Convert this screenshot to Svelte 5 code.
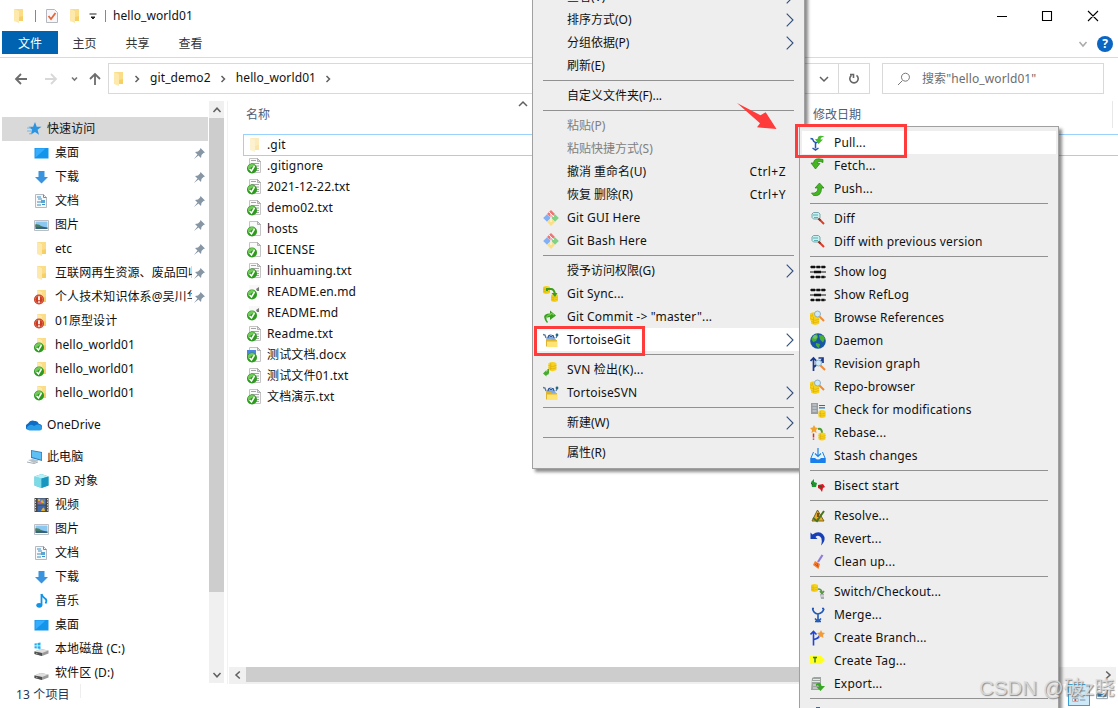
<script lang="ts">
  type Item = { label: string; icon?: string; key?: string; arrow?: boolean; disabled?: boolean; active?: boolean };
  type Entry = Item | null;

  const quick = [
    { label: '桌面', icon: 'desktop', pin: true },
    { label: '下载', icon: 'download', pin: true },
    { label: '文档', icon: 'document', pin: true },
    { label: '图片', icon: 'picture', pin: true },
    { label: 'etc', icon: 'folder', pin: true },
    { label: '互联网再生资源、废品回收', icon: 'folder', pin: true },
    { label: '个人技术知识体系@吴川华', icon: 'folder-red', pin: true },
    { label: '01原型设计', icon: 'folder-red' },
    { label: 'hello_world01', icon: 'folder-ok' },
    { label: 'hello_world01', icon: 'folder-ok' },
    { label: 'hello_world01', icon: 'folder-ok' }
  ];

  const computer = [
    { label: '3D 对象', icon: 'cube' },
    { label: '视频', icon: 'video' },
    { label: '图片', icon: 'picture' },
    { label: '文档', icon: 'document' },
    { label: '下载', icon: 'download' },
    { label: '音乐', icon: 'music' },
    { label: '桌面', icon: 'desktop' },
    { label: '本地磁盘 (C:)', icon: 'disk-c' },
    { label: '软件区 (D:)', icon: 'disk' }
  ];

  const files = [
    { name: '.git', icon: 'folder-faded' },
    { name: '.gitignore', icon: 'txt' },
    { name: '2021-12-22.txt', icon: 'txt' },
    { name: 'demo02.txt', icon: 'txt' },
    { name: 'hosts', icon: 'blank' },
    { name: 'LICENSE', icon: 'blank' },
    { name: 'linhuaming.txt', icon: 'txt' },
    { name: 'README.en.md', icon: 'md' },
    { name: 'README.md', icon: 'md' },
    { name: 'Readme.txt', icon: 'txt' },
    { name: '测试文档.docx', icon: 'docx' },
    { name: '测试文件01.txt', icon: 'txt' },
    { name: '文档演示.txt', icon: 'txt' }
  ];

  // null is a separator
  const mainMenu: Entry[] = [
    { label: '查看(V)', arrow: true },
    { label: '排序方式(O)', arrow: true },
    { label: '分组依据(P)', arrow: true },
    { label: '刷新(E)' },
    null,
    { label: '自定义文件夹(F)...' },
    null,
    { label: '粘贴(P)', disabled: true },
    { label: '粘贴快捷方式(S)', disabled: true },
    { label: '撤消 重命名(U)', key: 'Ctrl+Z' },
    { label: '恢复 删除(R)', key: 'Ctrl+Y' },
    { label: 'Git GUI Here', icon: 'git' },
    { label: 'Git Bash Here', icon: 'git' },
    null,
    { label: '授予访问权限(G)', arrow: true },
    { label: 'Git Sync...', icon: 'sync' },
    { label: 'Git Commit -> "master"...', icon: 'commit' },
    { label: 'TortoiseGit', icon: 'tortoise', arrow: true, active: true },
    null,
    { label: 'SVN 检出(K)...', icon: 'svn-checkout' },
    { label: 'TortoiseSVN', icon: 'tortoise', arrow: true },
    null,
    { label: '新建(W)', arrow: true },
    null,
    { label: '属性(R)' }
  ];

  const gitMenu: Entry[] = [
    { label: 'Pull...', icon: 'pull', active: true },
    { label: 'Fetch...', icon: 'fetch' },
    { label: 'Push...', icon: 'push' },
    null,
    { label: 'Diff', icon: 'diff' },
    { label: 'Diff with previous version', icon: 'diff' },
    null,
    { label: 'Show log', icon: 'log' },
    { label: 'Show RefLog', icon: 'log' },
    { label: 'Browse References', icon: 'browse' },
    { label: 'Daemon', icon: 'globe' },
    { label: 'Revision graph', icon: 'graph' },
    { label: 'Repo-browser', icon: 'browse' },
    { label: 'Check for modifications', icon: 'check-mod' },
    { label: 'Rebase...', icon: 'rebase' },
    { label: 'Stash changes', icon: 'stash' },
    null,
    { label: 'Bisect start', icon: 'bisect' },
    null,
    { label: 'Resolve...', icon: 'resolve' },
    { label: 'Revert...', icon: 'revert' },
    { label: 'Clean up...', icon: 'clean' },
    null,
    { label: 'Switch/Checkout...', icon: 'switch' },
    { label: 'Merge...', icon: 'merge' },
    { label: 'Create Branch...', icon: 'branch' },
    { label: 'Create Tag...', icon: 'tag' },
    { label: 'Export...', icon: 'export' },
    null,
    { label: '', icon: 'add' }
  ];
</script>

{#snippet folder()}
  <path d="M4 1h9v12H4z" fill="#fbdc87" />
  <path d="M4 1l5 2v12l-5-2z" fill="#fde9ab" />
  <path d="M9 9l4-1v5H9z" fill="#f3c84f" opacity=".6" />
{/snippet}

{#snippet ok()}
  <circle cx="6" cy="10.5" r="5" fill="#2c9a1d" />
  <path d="M2 8.6a4.4 4.4 0 0 1 7.6-.6C6 8 4 10 2 12z" fill="#74c95c" />
  <path d="M3.6 11l1.9 2 3-5" fill="none" stroke="#fff" stroke-width="1.5" />
{/snippet}

{#snippet coins(x: number, y: number)}
  <path d="M{x} {y + 1}q3.5-2 7 0v6q-3.5 2-7 0z" fill="#f6d21c" />
  <path d="M{x} {y + 3}q3.5 2 7 0M{x} {y + 5}q3.5 2 7 0M{x + 2} {y + 1}v6" fill="none" stroke="#dfac08" stroke-width=".6" />
{/snippet}

{#snippet lens(x: number, y: number)}
  <path d="M{x + 4} {y + 5}l5 5" stroke="#f08a32" stroke-width="2" />
  <circle cx={x + 2.5} cy={y + 3} r="3" fill="#cdeaf8" stroke="#85a8c0" stroke-width=".9" />
{/snippet}

{#snippet icon(name: string)}
  <svg class="icon" viewBox="0 0 16 16" width="16" height="16">
    {#if name === 'folder'}
      {@render folder()}
    {:else if name === 'folder-faded'}
      <g opacity=".55">{@render folder()}</g>
    {:else if name === 'folder-ok'}
      {@render folder()}{@render ok()}
    {:else if name === 'folder-red'}
      {@render folder()}
      <circle cx="6" cy="10.5" r="5" fill="#cb3a20" />
      <circle cx="6" cy="10.5" r="3.8" fill="none" stroke="#e0745c" stroke-width=".8" />
      <path d="M6 7.3v4M6 12.3v1.4" stroke="#fff" stroke-width="1.8" />
    {:else if name === 'txt' || name === 'blank' || name === 'docx'}
      <path d="M3.5.5h8l3 3v11h-11z" fill="#fafafa" stroke="#c4c4c4" />
      <path d="M11.5.5v3h3z" fill="#ddd" stroke="#999" stroke-width=".7" />
      {#if name === 'txt'}
        <path d="M5 2.500h5M5 5.500h8M5 8h8M9 10.500h4M9 12.500h4" stroke="#a6a6a6" stroke-width="1" />
      {:else if name === 'docx'}
        <path d="M1 3h9v8H1z" fill="#4b86e0" />
      {/if}
      {@render ok()}
    {:else if name === 'md'}
      <path d="M3 1h11v13H3z" fill="#f8f8f8" />
      <path d="M10 5l3-2v4h-2z" fill="#777" />
      {@render ok()}
    {:else if name === 'star'}
      <path d="M9 1l1.7 4.7 4.8.1-3.9 3 1.4 5L9 11l-4.4 2.8 1.600-5-3.700-3 4.600-.1z" fill="#2b93e0" />
      <path d="M1 7h4M1 10h5M3 13l3-1" stroke="#6cbcf2" stroke-width="1" />
    {:else if name === 'desktop'}
      <path d="M1.500 3h14v10.500h-14z" fill="#1495ec" />
      <path d="M2.500 12.500l10-9h-10z" fill="#35adff" />
    {:else if name === 'download'}
      <path d="M5.500 2h6v6H15l-6.500 6.500L2 8h3.500z" fill="#3a93de" />
    {:else if name === 'document'}
      <path d="M2.500 1.500h8l3 3v10h-11z" fill="#f8f8f8" stroke="#b4babf" />
      <path d="M10.500 1.500v3h3" fill="none" stroke="#888" />
      <path d="M4 4h4M5 6h4M4 9h8M9 11.500h3M4 12h4" stroke="#3b8fc7" stroke-width="1.2" />
      <path d="M8 7h4v3H8z" fill="#5aa5d5" />
    {:else if name === 'picture'}
      <path d="M1.500 3.500h14v10h-14z" fill="#fff" stroke="#b9bfc4" />
      <path d="M2.500 4.500h12v7.500h-12z" fill="#8cc7f2" />
      <path d="M2.500 8l4 1 8 1.500V12h-12z" fill="#35647a" />
      <path d="M2.500 7q4 0 7 3h-7z" fill="#4a7d67" />
    {:else if name === 'cube'}
      <path d="M8.500 1l7 2.500v9l-7 2.500-7-2.500v-9z" fill="#32b8cf" />
      <path d="M1.500 3.500l7 2V15l-7-2.500z" fill="#7cdbe6" />
      <path d="M8.500 1l7 2.500-7 2-7-2z" fill="#b9f0f5" />
      <path d="M8.500 5.500l7-2v9l-7 2.500z" fill="#1797c0" />
    {:else if name === 'video'}
      <path d="M1.500 1h14v14h-14z" fill="#464646" />
      <path d="M2.500 2v12M14.500 2v12" stroke="#ddd" stroke-width="1" stroke-dasharray="1.3 1.3" />
      <path d="M4.500 1.500h8v6h-8z" fill="#5a83bc" />
      <path d="M4.500 8.500h8v6h-8z" fill="#3d65aa" />
      <path d="M7 6q2-6 4 0M8 14q3-7 4 0M5 2h2v2H5z" fill="#e3ae2b" />
      <path d="M5 5h3v2" fill="none" stroke="#d9488a" />
    {:else if name === 'music'}
      <path d="M8.500 1q1 3 3.500 4.500t.5 5" fill="none" stroke="#0f94e8" stroke-width="1.8" />
      <path d="M8.500 1v11" stroke="#0f94e8" stroke-width="1.800" />
      <ellipse cx="6.300" cy="12.300" rx="3" ry="2.400" fill="#0f94e8" />
    {:else if name === 'disk' || name === 'disk-c'}
      <path d="M1.500 10.500l6-2.500 8 1.500v3L9 15l-7.500-2z" fill="#9a9a9a" />
      <path d="M1.500 10.500l6-2.500 8 1.500L9 12z" fill="#dedede" />
      <path d="M1.500 10.500L9 12v3l-7.500-2z" fill="#505050" />
      <path d="M3 12.300l1.500.3" stroke="#4bdc58" />
      {#if name === 'disk-c'}
        <path d="M1.500 2.500l2.300-.3v2.300H1.500zM4.500 2l3-.5v3h-3zM1.500 5.200h2.300v2.300l-2.300-.3zM4.500 5.200h3V8l-3-.4z" fill="#1fb0ee" />
      {/if}
    {:else if name === 'onedrive'}
      <path d="M1 12.500a3.500 3.500 0 0 1 1-6Q4.500 2 9 4q2.500-.4 4 3a3 3 0 0 1 2.500 5z" fill="#0f6cc4" />
      <path d="M4 13.500q-3 0-3-3.200 3-4.300 7-1.300l3-1.500q5 0 5 3.500 0 2.500-2.500 2.500z" fill="#2a9de8" />
    {:else if name === 'pc'}
      <path d="M5 1l11 2v9L5 9z" fill="#2d7fc0" />
      <path d="M5.800 2l9.500 1.800v7L5.800 8z" fill="#5fc0f5" />
      <path d="M2 11l5-1 6 1.500L8 14z" fill="#b6c0c8" />
      <path d="M1 13l7 1.500 4-1.500" fill="none" stroke="#a5aeb5" />
    {:else if name === 'git'}
      <path d="M8 0l4 4-4 3.800L4 4z" fill="#f07575" />
      <path d="M4 4.200L7.800 8 4 11.800.200 8z" fill="#83b0f5" />
      <path d="M12 4.200L15.800 8 12 11.800 8.200 8z" fill="#82d286" />
      <path d="M8 8.200l4 3.800-4 4-4-4z" fill="#f8df88" />
      <path d="M6 2l5 5M8 4v8" stroke="#fff" stroke-width=".9" />
    {:else if name === 'sync'}
      {@render coins(0, 0)}
      {@render coins(8, 8)}
      <path d="M4 5V3h4q3 0 4 5" fill="none" stroke="#3e9c1b" stroke-width="2" />
      <path d="M8.500 7h6L12 11z" fill="#3e9c1b" />
    {:else if name === 'commit'}
      <path d="M4 14Q-3 5 7 4.500V1.500l6 5L7 11V8Q1 8 5 13z" fill="#35a11d" />
      <path d="M3 9q1-3.500 5-3.500V4l3 2" fill="none" stroke="#87d35e" />
    {:else if name === 'tortoise'}
      <path d="M3 7q4-9 9-1l1 2H3z" fill="#84a9dc" />
      <path d="M5 6l1-3 2 2 2-2 1 3" fill="none" stroke="#31588e" />
      <path d="M0 2.500l2 .5 1 3M13 6l1-2" fill="none" stroke="#59799b" stroke-width="1.300" />
      <circle cx="14" cy="3" r="1.400" fill="#1c6b80" />
      <path d="M3 7h5l1 1h5v6.500H3z" fill="#ddb432" />
      <path d="M4 9.500h10.500v5.500H4z" fill="#ffe473" />
    {:else if name === 'svn-checkout'}
      <g transform="translate(-1.500 0) scale(1.150)">{@render coins(6, 0)}</g>
      <path d="M6 7v4q0 2-2.500 2v1.500L0 11.500 3.500 8v2q1 0 1-3z" fill="#45ad29" />
    {:else if name === 'pull'}
      <path d="M.5 3.500l2 .5q1 3 3 3.500v6M6 8l3-2M2.500 13l3 2 3-2" fill="none" stroke="#2357b5" stroke-width="1.500" />
      <path d="M14.500 1.500Q8-1 7.500 4H5l3.500 5L13 4.500h-2.500Q10.500 2 14.500 1.500z" fill="#45ba2a" />
    {:else if name === 'fetch'}
      <path d="M13 1.500Q4-1 3.500 5H1l4.500 6L10 5.500H7.500q0-3.500 5.500-1z" fill="#44b720" stroke="#287f15" stroke-width=".7" />
    {:else if name === 'push'}
      <path d="M1.500 12q6 1 6.500-5H5l4.500-5L14 7h-2.500q0 9-8 7.500z" fill="#44b720" stroke="#287f15" stroke-width=".7" />
    {:else if name === 'diff'}
      <path d="M8 7l6 6" stroke="#e33a27" stroke-width="2" />
      <path d="M2 3l1.500-1.500h5L10 3v3.500L8.500 8h-5L2 6.500z" fill="#c5f2f1" stroke="#7aa5ac" />
      <path d="M3 4h5M4 6.500h4" stroke="#419da5" stroke-width=".8" />
      <path d="M8.500 7.500l2 2" stroke="#853b2b" stroke-width="2" />
    {:else if name === 'log'}
      <path d="M0 3h16M0 8h16M0 13h16" stroke="#111" stroke-width="1" />
      <path d="M1 3h4M6.500 3h3.500M11.500 3h3.500M4 8h7M1 13h3M6 13h4M11.500 13h3" stroke="#111" stroke-width="2.600" />
    {:else if name === 'browse'}
      <g transform="scale(1.15)">{@render coins(0, 2)}{@render coins(1, 5)}</g>
      {@render lens(5, 1)}
    {:else if name === 'globe'}
      <circle cx="8" cy="8" r="7.8" fill="#1656a4" />
      <path d="M1.500 6q1-4 5.500-5l1 3-2 4-3 1zM9 2l4 .5 2 3-2 4-3-3zM6 10l4 1-1 4q-4-2-3-5z" fill="#47ae36" />
      <circle cx="5" cy="4" r="2" fill="#b4e9a0" opacity=".4" />
    {:else if name === 'graph'}
      <path d="M3.500 15V2M.5 5l3-3 3 3M4 11l9-8M8.500 2h4.500v5" fill="none" stroke="#18388c" stroke-width="1.7" />
      {@render lens(6, 4)}
    {:else if name === 'check-mod'}
      <path d="M1 1h7v11H1z" fill="#989fa4" />
      <path d="M2.500 3h4M2.500 6h4M2.500 9h4" stroke="#d9dcde" />
      <path d="M9 3.500h6M9 5.800h6" stroke="#1a76b5" stroke-width="1.2" />
      {@render coins(8.5, 8)}
    {:else if name === 'rebase'}
      <path d="M4 0l1.300 2.500L8 3 6 5l.5 3L4 6.500 1.500 8 2 5 0 3l2.700-.5z" fill="#f2a12d" />
      <path d="M3.500 8.500v4M3.500 13.500v1.200" stroke="#db2c22" stroke-width="1.5" />
      <path d="M8 4q4-1 4 4" fill="none" stroke="#4a9b37" stroke-width="2" />
      {@render coins(8.5, 7.5)}
    {:else if name === 'stash'}
      <path d="M3.500 4L1 10v4.500h14V10l-2.500-6" fill="#e7f4ff" stroke="#2181df" />
      <path d="M.5 10H5q3 3 6 0h4.500v5H.5z" fill="#1980eb" />
      <path d="M8 0v8M5 5.500l3 3 3-3" fill="none" stroke="#2181df" stroke-width="1.2" />
    {:else if name === 'bisect'}
      <path d="M1 4l3-3v3l3 1-1 4H2z" fill="#149b2b" />
      <path d="M8 7l5-1 2 3-2 1-1 4-2-3-2-1z" fill="#d71824" />
      <path d="M1 5l2 2M9 8l3 1" stroke="#365522" />
    {:else if name === 'resolve'}
      <path d="M7.500 2L14 13H2z" fill="#e9ad25" stroke="#7e641b" />
      <path d="M8 5v4M8 10.500v1" stroke="#553311" stroke-width="1.5" />
      <path d="M3 10l4 3 7-10" fill="none" stroke="#477420" stroke-width="2" />
    {:else if name === 'revert'}
      <path d="M.5 1.500l2 2Q9-1 13 3.500q4 5-2 11Q13 8 10 5.500 7.500 4 5.500 6l2 2h-7z" fill="#1740b7" />
    {:else if name === 'clean'}
      <path d="M12.500 1L8 8" stroke="#917bd8" stroke-width="2.2" />
      <path d="M5 7l5 3-1.500 5L3 11z" fill="#f27d30" />
      <path d="M5 10l2 2M7 9l1 4" stroke="#c95319" />
    {:else if name === 'switch'}
      {@render coins(1, 0)}
      <path d="M8 5q4 0 4 4M10 7l2 3 2-3" fill="none" stroke="#5a9a42" stroke-width="1.5" />
      <path d="M10 10h4v5h-3z" fill="#a8afb3" />
      <path d="M11 12h3" stroke="#eee" />
    {:else if name === 'merge'}
      <path d="M2.500 1.500q1 5 5.500 5.500v6M14 1.500Q13 6 8 7M5 11.500l3 3 3-3M5 14.500h6M2 1.500h2M12 1.500h2" fill="none" stroke="#2359b6" stroke-width="1.600" />
    {:else if name === 'branch'}
      <path d="M3.500 15.500V1.500M.5 4.500l3-3 3 3M4 9.500q5-1 6-5" fill="none" stroke="#2144d2" stroke-width="1.6" />
      <path d="M11 0l1.200 2.500L15 3l-2 2 .4 3-2.400-1.400L8.800 8 9 5 7 3l2.800-.5z" fill="#f19c39" />
    {:else if name === 'tag'}
      <path d="M0 3h11l4 4-4 4H0z" fill="#ffff20" />
      <path d="M3 4.500h4M5 4.500v5" stroke="#257b38" stroke-width="1.4" />
    {:else if name === 'export'}
      <path d="M2 2l2-1h7v11l-2 2H1z" fill="#9da5a1" />
      <path d="M3 3.500h7M2 5.500h8M3 9h5M3 12h5" stroke="#e5e9e5" />
      <path d="M6 8q5-3 5.500 2H15l-4.500 5L6.500 11H9q0-3-3-1z" fill="#37a622" />
    {:else if name === 'add'}
      <path d="M8 1v13M1 8h14" stroke="#2868bd" stroke-width="4" />
    {:else if name === 'pin'}
      <path d="M8.500 3L13 7.500l-1.500.5-2 2-.5 3-2.500-2.500-4.500 3.500 3.500-4.500L3 7l3-.5L8 4.500z" fill="#8796a5" />
    {/if}
  </svg>
{/snippet}

{#snippet chevron(d: string, size = 10)}
  <svg class="chevron" viewBox="0 0 10 10" width={size} height={size}><path {d} /></svg>
{/snippet}

{#snippet menu(items: Entry[])}
  {#each items as item}
    {#if item}
      <div class="item" class:active={item.active} class:disabled={item.disabled}>
        <span class="slot">{#if item.icon}{@render icon(item.icon)}{/if}</span>
        <span class="label" class:latin={item.label.charCodeAt(0) < 128}>{item.label}</span>
        {#if item.key}<span class="key">{item.key}</span>{/if}
        {#if item.arrow}
          <svg class="more" viewBox="0 0 8 14" width="8" height="14"><path d="M.7.7L7 7 .7 13.3" /></svg>
        {/if}
      </div>
    {:else}
      <div class="sep"></div>
    {/if}
  {/each}
{/snippet}

<div class="window">
  <header class="titlebar">
    <span class="tb-folder">{@render icon('folder')}</span>
    <i class="bar"></i>
    <svg class="props" viewBox="0 0 16 16" width="16" height="16">
      <path d="M2.500 1.500h8l3 3v10h-11z" fill="#f7f7f9" stroke="#b5b7c0" />
      <path d="M4.500 8l2.500 3 4.500-6" fill="none" stroke="#e4683c" stroke-width="1.8" />
    </svg>
    <span class="tb-folder2">{@render icon('folder')}</span>
    <svg class="drop" viewBox="0 0 8 8" width="8" height="8"><path d="M.5 1h7M2 4h4L4 6z" fill="#222" stroke="#222" /></svg>
    <i class="bar"></i>
    <span class="title">hello_world01</span>
    <svg class="controls" viewBox="0 0 112 14" width="112" height="14">
      <path d="M5 7.500h10M50.500 2.500h9v9h-9zM96 2l10 10M106 2L96 12" fill="none" stroke="#000" stroke-width="1.1" />
    </svg>
  </header>

  <nav class="tabs">
    <span class="tab file">文件</span>
    <span class="tab">主页</span>
    <span class="tab">共享</span>
    <span class="tab">查看</span>
    <span class="help-area">
      {@render chevron('M1.500 3l3.500 4 3.500-4')}
      <span class="help">?</span>
    </span>
  </nav>

  <div class="toolbar">
    <svg class="nav-arrows" viewBox="0 0 90 16" width="90" height="16">
      <path d="M13 8H2M7 3L2 8l5 5" fill="none" stroke="#6d6d6d" stroke-width="1.8" />
      <path d="M31 8h11M37 3l5 5-5 5" fill="none" stroke="#d8d8d8" stroke-width="1.8" />
      <path d="M58 6.500L60.500 9 63 6.500" fill="none" stroke="#777" stroke-width="1.6" />
      <path d="M81 14V3M76 8l5-5 5 5" fill="none" stroke="#6d6d6d" stroke-width="1.8" />
    </svg>
    <div class="address">
      {@render icon('folder')}
      {@render chevron('M3.500 2l3 3-3 3')}
      <span>git_demo2</span>
      {@render chevron('M3.500 2l3 3-3 3')}
      <span>hello_world01</span>
      {@render chevron('M3.500 2l3 3-3 3')}
      <span class="addr-drop">{@render chevron('M1 3l4 4 4-4')}</span>
      <span class="refresh">
        <svg viewBox="0 0 14 14" width="14" height="14"><path d="M9.500 3.300a4.200 4.200 0 1 1-5 0M3 2.500h3.500V6" fill="none" stroke="#666" stroke-width="1.6" /></svg>
      </span>
    </div>
    <div class="search">
      <svg viewBox="0 0 14 14" width="14" height="14"><path d="M5.500 8.500L1 13M8.500 1.200a4 4 0 1 1-.1 0z" fill="none" stroke="#777" /></svg>
      <span>搜索"hello_world01"</span>
    </div>
  </div>

  <main class="body">
    <aside class="sidebar">
      <div class="row root selected">{@render icon('star')}<span>快速访问</span></div>
      {#each quick as q}
        <div class="row">
          {@render icon(q.icon)}<span class="name">{q.label}</span>
          {#if q.pin}<span class="pin">{@render icon('pin')}</span>{/if}
        </div>
      {/each}
      <div class="row root gap">{@render icon('onedrive')}<span>OneDrive</span></div>
      <div class="row root gap">{@render icon('pc')}<span>此电脑</span></div>
      {#each computer as c}
        <div class="row">{@render icon(c.icon)}<span class="name">{c.label}</span></div>
      {/each}
    </aside>

    <div class="vscroll">
      <span class="btn">{@render chevron('M1.500 7L5 3.200 8.500 7')}</span>
      <span class="thumb"></span>
      <span class="btn end">{@render chevron('M1.500 3L5 6.800 8.500 3')}</span>
    </div>

    <section class="list">
      <div class="columns">
        <span class="col-name">名称</span>
        <span class="sort">{@render chevron('M1 7l4-4 4 4')}</span>
        <span class="col-date">修改日期</span>
      </div>
      <div class="files">
        {#each files as f, i}
          <div class="file-row" class:focus={i === 0}>{@render icon(f.icon)}<span>{f.name}</span></div>
        {/each}
      </div>
      <div class="hscroll">
        <span class="hbtn">{@render chevron('M6.800 1.500L3 5l3.800 3.500')}</span>
        <span class="hthumb"></span>
        <span class="hbtn right">{@render chevron('M3.200 1.500L7 5 3.200 8.500')}</span>
      </div>
    </section>
  </main>

  <footer class="status">
    <span>13 个项目</span>
    <div class="views">
      <svg class="view on" viewBox="0 0 22 22" width="22" height="22">
        <path d="M4 5h6v3H4zM4 10h6v3H4zM4 15h6v3H4z" fill="#fff" stroke="#8b98a1" stroke-width=".8" />
        <path d="M12 6.500h6M12 11.500h6M12 16.500h6" stroke="#789" />
        <path d="M6 15.500h2v2H6z" fill="#d33" />
      </svg>
      <svg class="view" viewBox="0 0 22 22" width="22" height="22">
        <path d="M5 5h12v10H5z" fill="#fff" stroke="#8b98a1" />
        <path d="M6 9l5 1 5-2v5H6z" fill="#376d9c" />
      </svg>
    </div>
  </footer>

  <div class="menu main-menu">{@render menu(mainMenu)}</div>
  <div class="menu git-menu">{@render menu(gitMenu)}</div>

  <div class="mark mark-git"></div>
  <div class="mark mark-pull"></div>
  <svg class="pointer" viewBox="0 0 40 27" width="40" height="27">
    <path d="M0 0l23.500 12.200 5.200-3L39.500 26 20 24.300l3-4z" fill="#ff3b3b" />
  </svg>
  <div class="watermark">CSDN @破z晓</div>
</div>

<style>
  :global(body) { margin: 0; overflow: hidden; }
  .window {
    position: relative; width: 1118px; height: 708px; overflow: hidden; background: #fff;
    display: flex; flex-direction: column;
    font: 12px/16px 'Noto Sans', 'Noto Sans CJK SC', sans-serif; color: #111; white-space: nowrap;
  }
  svg { display: block; flex-shrink: 0; }
  .chevron path { fill: none; stroke: #606060; stroke-width: 1.5; }

  .titlebar { height: 31px; display: flex; align-items: center; padding-left: 10px; box-sizing: border-box; flex-shrink: 0; }
  .bar { width: 1px; height: 12px; background: #888; }
  .tb-folder { width: 25px; }
  .props { margin-left: 8px; }
  .tb-folder2 { margin-left: 6px; }
  .drop { margin: 3px 8px 0 7px; }
  .title { margin-left: 7px; letter-spacing: .08px; }
  .controls { margin-left: auto; margin-right: 14px; }

  .tabs { height: 26px; display: flex; align-items: flex-start; border-bottom: 1px solid #d9dadb; padding-left: 2px; flex-shrink: 0; }
  .tab { width: 53px; height: 23px; line-height: 25px; text-align: center; color: #333; }
  .tab.file { width: 56px; background: #0063b1; color: #fff; }
  .help-area { margin-left: auto; display: flex; align-items: center; gap: 9px; padding: 5px 5px 0 0; }
  .help-area .chevron path { stroke: #aaa; }
  .help {
    width: 16px; height: 16px; border-radius: 50%; background: #0a66c2;
    color: #fff; font-weight: 700; text-align: center;
  }

  .toolbar { height: 43px; display: flex; align-items: flex-start; padding: 5px 14px 0; box-sizing: border-box; flex-shrink: 0; }
  .nav-arrows { margin-top: 8px; }
  .address {
    margin-left: 4px; width: 762px; height: 31px; box-sizing: border-box; border: 1px solid #d9d9d9;
    display: flex; align-items: center; padding-left: 1px; letter-spacing: .12px; line-height: 14px;
  }
  .address > span { margin-top: -2px; }
  .address > .chevron { margin: 0 8px 0 7px; }
  .address > .icon + .chevron { margin-left: 6px; margin-right: 8px; }
  .address > .addr-drop, .address > .refresh { margin-top: 0; }
  .address > .addr-drop { margin-left: auto; width: 29px; height: 100%; display: flex; align-items: center; justify-content: center; }
  .refresh { width: 30px; height: 100%; border-left: 1px solid #d9d9d9; display: flex; align-items: center; justify-content: center; }
  .search {
    margin-left: 12px; width: 222px; height: 31px; box-sizing: border-box; border: 1px solid #d9d9d9;
    display: flex; align-items: center; padding-left: 14px; gap: 11px; color: #6d6d6d; letter-spacing: .1px;
  }

  .body { flex: 1; min-height: 0; display: flex; }
  .sidebar { width: 206px; margin-left: 2px; padding-top: 16px; box-sizing: border-box; overflow: hidden; letter-spacing: .08px; }
  .row { height: 24px; display: flex; align-items: center; padding-left: 31px; }
  .row.root { padding-left: 24px; gap: 5px; }
  .row.selected { background: #d9d9d9; }
  .row.gap { margin-top: 8px; }
  .name { margin-left: 6px; max-width: 137px; overflow: hidden; flex-shrink: 0; }
  .pin { margin-left: auto; }
  .vscroll { width: 15px; margin-left: 1px; height: 582px; background: #f0f0f0; display: flex; flex-direction: column; flex-shrink: 0; }
  .btn { height: 17px; display: flex; align-items: center; justify-content: center; }
  .end { margin-top: auto; }
  .thumb { height: 474px; background: #cdcdcd; }
  .list { flex: 1; min-width: 0; margin-left: 3px; border-left: 1px solid #f2f2f2; display: flex; flex-direction: column; padding-left: 1px; }
  .columns { height: 33px; display: flex; align-items: flex-start; color: #4c607a; flex-shrink: 0; }
  .columns > span { padding-top: 6px; flex-shrink: 0; }
  .columns > .col-name { width: 272px; padding-left: 17px; }
  .columns > .sort { padding-top: 0; margin-top: -2px; width: 295px; }
  .columns > .col-date { width: 300px; border-right: 1px solid #e8e8e8; padding-bottom: 5px; box-sizing: border-box; }
  .files { flex: 1; padding-left: 14px; letter-spacing: .15px; }
  .file-row { height: 21px; display: flex; align-items: center; padding-left: 3px; gap: 5px; }
  .file-row.focus { height: 20px; border: 1px solid #99d1ff; border-right: 0; padding-left: 2px; margin-bottom: -1px; }
  .hscroll { height: 17px; width: 887px; background: #f0f0f0; display: flex; flex-shrink: 0; }
  .hbtn { width: 17px; height: 15px; display: flex; align-items: center; justify-content: center; }
  .hthumb { width: 740px; height: 15px; background: #cdcdcd; }
  .right { margin-left: auto; }

  .status { height: 24px; display: flex; color: #1e395b; padding-left: 16px; flex-shrink: 0; }
  .status > span { width: 64px; border-right: 1px solid #eee; height: 14px; line-height: 21px; letter-spacing: .15px; }
  .views { margin-left: auto; display: flex; gap: 1px; padding-right: 5px; }
  .view { border: 1px solid transparent; box-sizing: border-box; }
  .view.on { background: #cde8f6; border-color: #3a9fd6; }

  .menu { position: absolute; background: #eee; border: 1px solid #a0a0a0; box-sizing: border-box; box-shadow: 3px 3px 3px rgba(0, 0, 0, .45); }
  .main-menu { left: 532px; top: -20px; width: 273px; height: 489px; padding: 4px 2px; }
  .git-menu { left: 799px; top: 126px; width: 260px; height: 620px; padding: 4px 2px; }
  .item { height: 23px; display: flex; align-items: center; padding-left: 8px; }
  .item.active { background: #fff; }
  .item.disabled { color: #808080; }
  .slot { width: 24px; flex-shrink: 0; }
  .latin { letter-spacing: .2px; }
  .key { margin-left: auto; margin-right: 16px; letter-spacing: .45px; }
  .more { margin-left: auto; margin-right: 8px; }
  .more path { fill: none; stroke: #334f7c; stroke-width: 1.1; }
  .sep { height: 1px; background: #919191; margin: 3px 8px; }

  .mark { position: absolute; border: 3px solid #ff3b3b; box-sizing: border-box; }
  .mark-git { left: 534px; top: 326px; width: 111px; height: 30px; }
  .mark-pull { left: 795px; top: 124px; width: 112px; height: 34px; }
  .pointer { position: absolute; left: 737px; top: 103px; }
  .watermark {
    position: absolute; left: 979px; top: 674px; font: 20.500px/28px 'Liberation Sans', 'Noto Sans CJK SC', sans-serif;
    color: rgba(220, 220, 220, .9); text-shadow: 1px 1px 1px rgba(110, 110, 110, .75);
  }
</style>
